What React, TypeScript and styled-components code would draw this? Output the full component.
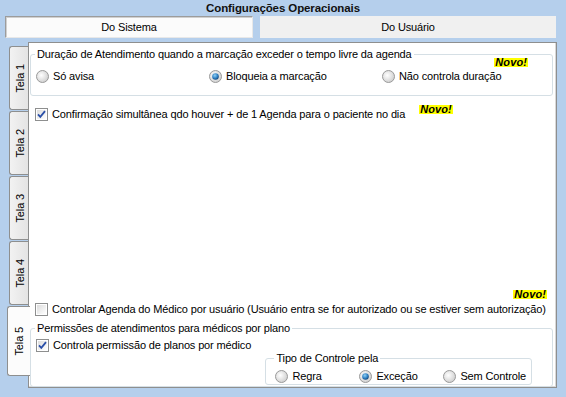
import React, { FC } from "react";
import styled, { createGlobalStyle } from "styled-components";

const GlobalStyle = createGlobalStyle`
  html, body {
    margin: 0;
    padding: 0;
    background: #b5cfec;
  }
  body {
    font-family: "Liberation Sans", Arial, sans-serif;
    font-size: 11px;
    letter-spacing: -0.14px;
    color: #000;
  }
`;

const RadioIcon: FC<{ checked?: boolean }> = ({ checked }) => (
  <svg width="13" height="13" viewBox="0 0 13 13">
    <defs>
      <radialGradient id="rg" cx="0.4" cy="0.4" r="0.7">
        <stop offset="0" stopColor="#ffffff" />
        <stop offset="1" stopColor="#c9c9c9" />
      </radialGradient>
      <radialGradient id="rb" cx="0.4" cy="0.35" r="0.7">
        <stop offset="0" stopColor="#8fd0f5" />
        <stop offset="0.6" stopColor="#2e7fc2" />
        <stop offset="1" stopColor="#0e3e6e" />
      </radialGradient>
    </defs>
    <circle cx="6.5" cy="6.5" r="6" fill="url(#rg)" stroke="#9a9a9a" strokeWidth="1" />
    {checked && <circle cx="6.5" cy="6.5" r="3.3" fill="url(#rb)" />}
  </svg>
);

const CheckIcon: FC<{ checked?: boolean }> = ({ checked }) => (
  <svg width="13" height="13" viewBox="0 0 13 13">
    <defs>
      <linearGradient id="cg" x1="0" y1="0" x2="1" y2="1">
        <stop offset="0" stopColor="#dcdcdc" />
        <stop offset="1" stopColor="#ffffff" />
      </linearGradient>
    </defs>
    <rect x="0.5" y="0.5" width="12" height="12" fill="#fff" stroke="#8e8f8f" />
    <rect x="2" y="2" width="9" height="9" fill="url(#cg)" />
    {checked && (
      <path d="M3 6.3 L5.3 8.8 L10 3.2" fill="none" stroke="#2a4fa8" strokeWidth="1.8" />
    )}
  </svg>
);

const Radio: FC<{ label: string; checked?: boolean }> = ({ label, checked }) => (
  <Option>
    <RadioIcon checked={checked} />
    <span>{label}</span>
  </Option>
);

const Check: FC<{ label: string; checked?: boolean }> = ({ label, checked }) => (
  <Option>
    <CheckIcon checked={checked} />
    <span>{label}</span>
  </Option>
);

const tabs = ["Tela 1", "Tela 2", "Tela 3", "Tela 4", "Tela 5"];

export default function App() {
  return (
    <>
      <GlobalStyle />
      <Window>
        <TitleBar>Configurações Operacionais</TitleBar>
        <TopBar>
          <TopButton $active>Do Sistema</TopButton>
          <TopButton>Do Usuário</TopButton>
        </TopBar>
        <Body>
          <TabStrip>
            {tabs.map((t, i) => (
              <Tab key={t} $active={i === 4}>
                <TabLabel>{t}</TabLabel>
              </Tab>
            ))}
          </TabStrip>
          <Panel>
            <Group>
              <Legend>Duração de Atendimento quando a marcação exceder o tempo livre da agenda</Legend>
              <NewBadge $float>Novo!</NewBadge>
              <RadioRow $cols="173px 173px auto">
                <Radio label="Só avisa" />
                <Radio label="Bloqueia a marcação" checked />
                <Radio label="Não controla duração" />
              </RadioRow>
            </Group>
            <Row $top={11}>
              <Check label="Confirmação simultânea qdo houver + de 1 Agenda para o paciente no dia" checked />
              <NewBadge $lift>Novo!</NewBadge>
            </Row>
            <Spacer />
            <BadgeRow>
              <NewBadge>Novo!</NewBadge>
            </BadgeRow>
            <Row $top={3}>
              <Check label="Controlar Agenda do Médico por usuário (Usuário entra se for autorizado ou se estiver sem autorização)" />
            </Row>
            <Group $second>
              <Legend>Permissões de atendimentos para médicos por plano</Legend>
              <Check label="Controla permissão de planos por médico" checked />
              <InnerGroup>
                <Legend>Tipo de Controle pela</Legend>
                <RadioRow $cols="84px 84px auto">
                  <Radio label="Regra" />
                  <Radio label="Exceção" checked />
                  <Radio label="Sem Controle" />
                </RadioRow>
              </InnerGroup>
            </Group>
          </Panel>
        </Body>
      </Window>
    </>
  );
}

const Window = styled.div`
  width: 566px;
  height: 397px;
  background: #b5cfec;
  display: flex;
  flex-direction: column;
  overflow: hidden;
`;

const TitleBar = styled.div`
  height: 16px;
  line-height: 17px;
  text-align: center;
  font-weight: bold;
  font-size: 11.5px;
  letter-spacing: -0.1px;
  color: #111;
`;

const TopBar = styled.div`
  display: flex;
  gap: 7px;
  padding: 0 10px 0 5px;
  height: 22px;
`;

const TopButton = styled.div<{ $active?: boolean }>`
  flex: ${({ $active }) => ($active ? "0 0 248px" : "1")};
  box-sizing: border-box;
  display: flex;
  align-items: center;
  justify-content: center;
  font-size: 11px;
  background: ${({ $active }) => ($active ? "#fbfbfb" : "#f0f0f0")};
  border: 1px solid ${({ $active }) => ($active ? "#9c9c9c" : "#f0f0f0")};
  border-right-color: ${({ $active }) => ($active ? "#e8e8e8" : "#f0f0f0")};
  border-bottom-color: ${({ $active }) => ($active ? "#e8e8e8" : "#f0f0f0")};
  box-shadow: ${({ $active }) => ($active ? "inset 1px 1px 0 #d0d0d0" : "none")};
`;

const Body = styled.div`
  display: flex;
  margin-top: 4px;
  padding: 0 9px 0 7px;
  height: 346px;
`;

const TabStrip = styled.div`
  width: 22px;
  display: flex;
  flex-direction: column;
  padding-top: 4px;
  gap: 1px;
`;

const Tab = styled.div<{ $active?: boolean }>`
  box-sizing: border-box;
  height: ${({ $active }) => ($active ? "70px" : "64px")};
  margin-left: ${({ $active }) => ($active ? "0" : "2px")};
  width: ${({ $active }) => ($active ? "23px" : "20px")};
  background: ${({ $active }) => ($active ? "#fcfcfc" : "linear-gradient(to right, #f2f2f2, #e3e3e3)")};
  border: 1px solid #8e8f8f;
  border-right: none;
  border-radius: 3px 0 0 3px;
  display: flex;
  align-items: center;
  justify-content: center;
  position: relative;
  z-index: ${({ $active }) => ($active ? 2 : 0)};
`;

const TabLabel = styled.span`
  writing-mode: vertical-rl;
  transform: rotate(180deg);
  font-size: 11px;
  white-space: nowrap;
`;

const Panel = styled.div`
  flex: 1;
  box-sizing: border-box;
  background: #fff;
  border: 1px solid #8e8f8f;
  box-shadow: inset -1px -1px 0 #d8d8d8;
  display: flex;
  flex-direction: column;
  padding: 5px 3px 0 1px;
  margin-left: -1px;
  position: relative;
  z-index: 1;
`;

const Group = styled.fieldset<{ $second?: boolean }>`
  margin: ${({ $second }) => ($second ? "5px 0 0 0" : "0")};
  padding: ${({ $second }) => ($second ? "3px 5px 1px 5px" : "8px 5px 11px 5px")};
  border: 1px solid #d5dfe5;
  border-radius: 3px;
  position: relative;
  min-width: 0;
`;

const InnerGroup = styled.fieldset`
  margin: -2px 15px 0 auto;
  width: 264px;
  box-sizing: border-box;
  padding: 4px 5px 0 9px;
  border: 1px solid #d5dfe5;
  border-radius: 3px;
`;

const Legend = styled.legend`
  padding: 0 2px;
  margin-left: -1px;
  font-size: 11px;
  line-height: 13px;
`;

const RadioRow = styled.div<{ $cols: string }>`
  display: grid;
  grid-template-columns: ${({ $cols }) => $cols};
`;

const Option = styled.label`
  display: inline-flex;
  align-items: center;
  gap: 4px;
  font-size: 11px;
  line-height: 15px;
  white-space: nowrap;
`;

const Row = styled.div<{ $top: number }>`
  display: flex;
  align-items: center;
  padding-left: 5px;
  margin-top: ${({ $top }) => $top}px;
`;

const Spacer = styled.div`
  flex: 1;
`;

const BadgeRow = styled.div`
  display: flex;
  justify-content: flex-end;
  padding-right: 6px;
`;

const NewBadge = styled.span<{ $float?: boolean; $lift?: boolean }>`
  display: inline-block;
  background: #ffff00;
  font-weight: 900;
  font-style: italic;
  font-size: 11px;
  line-height: 9px;
  height: 9px;
  padding: 0 1px;
  letter-spacing: 0.1px;
  color: #000;
  ${({ $float }) => ($float ? "position: absolute; top: -3px; right: 24px;" : "")}
  ${({ $lift }) => ($lift ? "margin-left: 14px; position: relative; top: -5px;" : "")}
`;
